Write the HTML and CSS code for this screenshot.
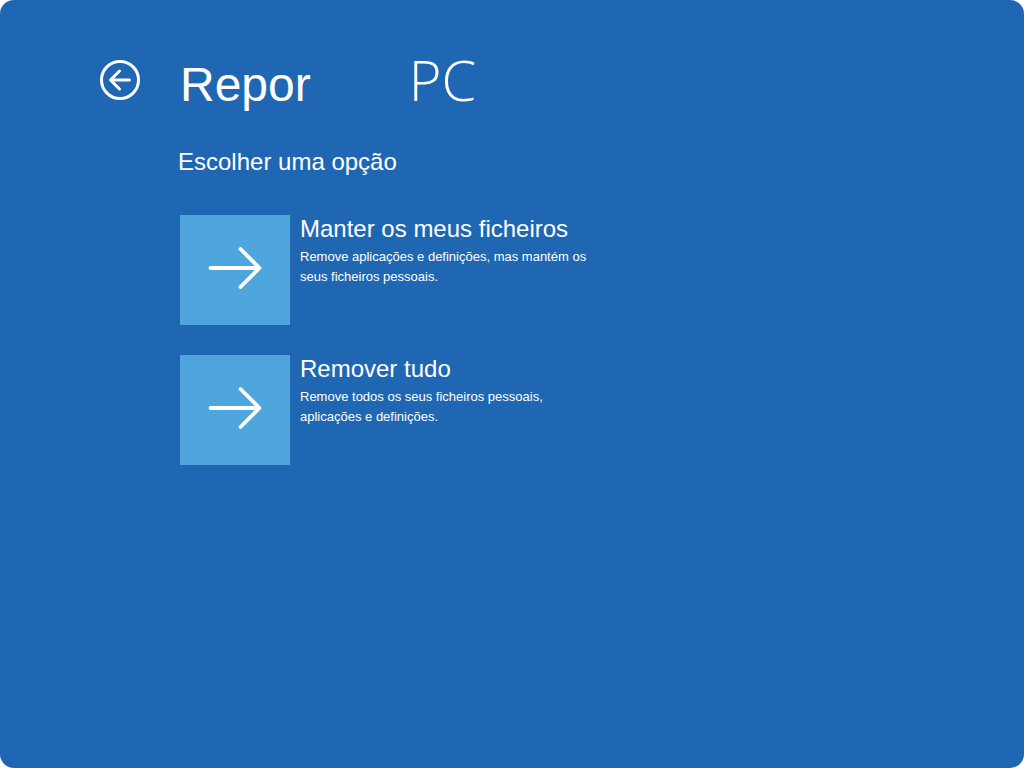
FILE: index.html
```html
<!DOCTYPE html>
<html lang="pt">
<head>
    <meta charset="UTF-8">
    <meta name="viewport" content="width=device-width, initial-scale=1.0">
    <title>Repor PC</title>
    <link rel="stylesheet" href="styles.css">
</head>
<body>
    <div class="screen">
        <header class="header">
            <button class="back" type="button" aria-label="Voltar">
                <svg viewBox="0 0 40 40" width="40" height="40" fill="none" stroke="currentColor">
                    <circle cx="20" cy="20" r="18.5" stroke-width="3"/>
                    <path d="M29.5 20H10.5M19.5 11L10.5 20L19.5 29" stroke-width="3" stroke-linecap="round" stroke-linejoin="round"/>
                </svg>
            </button>
            <h1 class="title">
                <span>Repor</span>
                <span class="device">PC</span>
            </h1>
        </header>
        <main class="content">
            <h2 class="subtitle">Escolher uma opção</h2>
            <div class="options">
                <button class="option" type="button">
                    <span class="tile">
                        <svg viewBox="0 0 110 110" width="110" height="110" fill="none" stroke="currentColor">
                            <path d="M30.5 53H79M60.5 34L79.5 53L60.5 72" stroke-width="3.8" stroke-linecap="round" stroke-linejoin="round"/>
                        </svg>
                    </span>
                    <span class="text">
                        <span class="name">Manter os meus ficheiros</span>
                        <span class="description">Remove aplicações e definições, mas mantém os seus ficheiros pessoais.</span>
                    </span>
                </button>
                <button class="option" type="button">
                    <span class="tile">
                        <svg viewBox="0 0 110 110" width="110" height="110" fill="none" stroke="currentColor">
                            <path d="M30.5 53H79M60.5 34L79.5 53L60.5 72" stroke-width="3.8" stroke-linecap="round" stroke-linejoin="round"/>
                        </svg>
                    </span>
                    <span class="text">
                        <span class="name">Remover tudo</span>
                        <span class="description">Remove todos os seus ficheiros pessoais, aplicações e definições.</span>
                    </span>
                </button>
            </div>
        </main>
    </div>
</body>
</html>
```

FILE: styles.css
```css
* {
    box-sizing: border-box;
}
body {
    margin: 0;
    background: white;
    color: white;
    font-family: "Liberation Sans", Arial, sans-serif;
}
button {
    padding: 0;
    border: 0;
    background: none;
    color: inherit;
    font: inherit;
    text-align: left;
    cursor: pointer;
}
svg {
    display: block;
}
.screen {
    min-height: 100vh;
    padding: 47px 100px;
    border-radius: 14px;
    background: #1f67b2;
}
.header {
    display: flex;
    gap: 40px;
}
.back {
    width: 40px;
    height: 40px;
    margin-top: 13px;
}
.title {
    display: flex;
    align-items: baseline;
    gap: 98px;
    margin: 0;
    font-size: 48px;
    font-weight: normal;
    line-height: 64px;
}
.device {
    font-family: "Open Sans", sans-serif;
    font-size: 56px;
    font-weight: 300;
}
.content {
    padding-left: 78px;
}
.subtitle {
    margin: 30px 0 38px;
    font-size: 24px;
    font-weight: normal;
    line-height: 30px;
}
.options {
    display: flex;
    flex-direction: column;
    align-items: flex-start;
    gap: 30px;
    padding-left: 2px;
}
.option {
    display: flex;
    gap: 10px;
}
.tile {
    flex: none;
    background: #4ea6dd;
}
.text {
    display: flex;
    flex-direction: column;
    gap: 4px;
    max-width: 290px;
}
.name {
    font-size: 24px;
    line-height: 28px;
}
.description {
    font-size: 13px;
    line-height: 20px;
}
```
